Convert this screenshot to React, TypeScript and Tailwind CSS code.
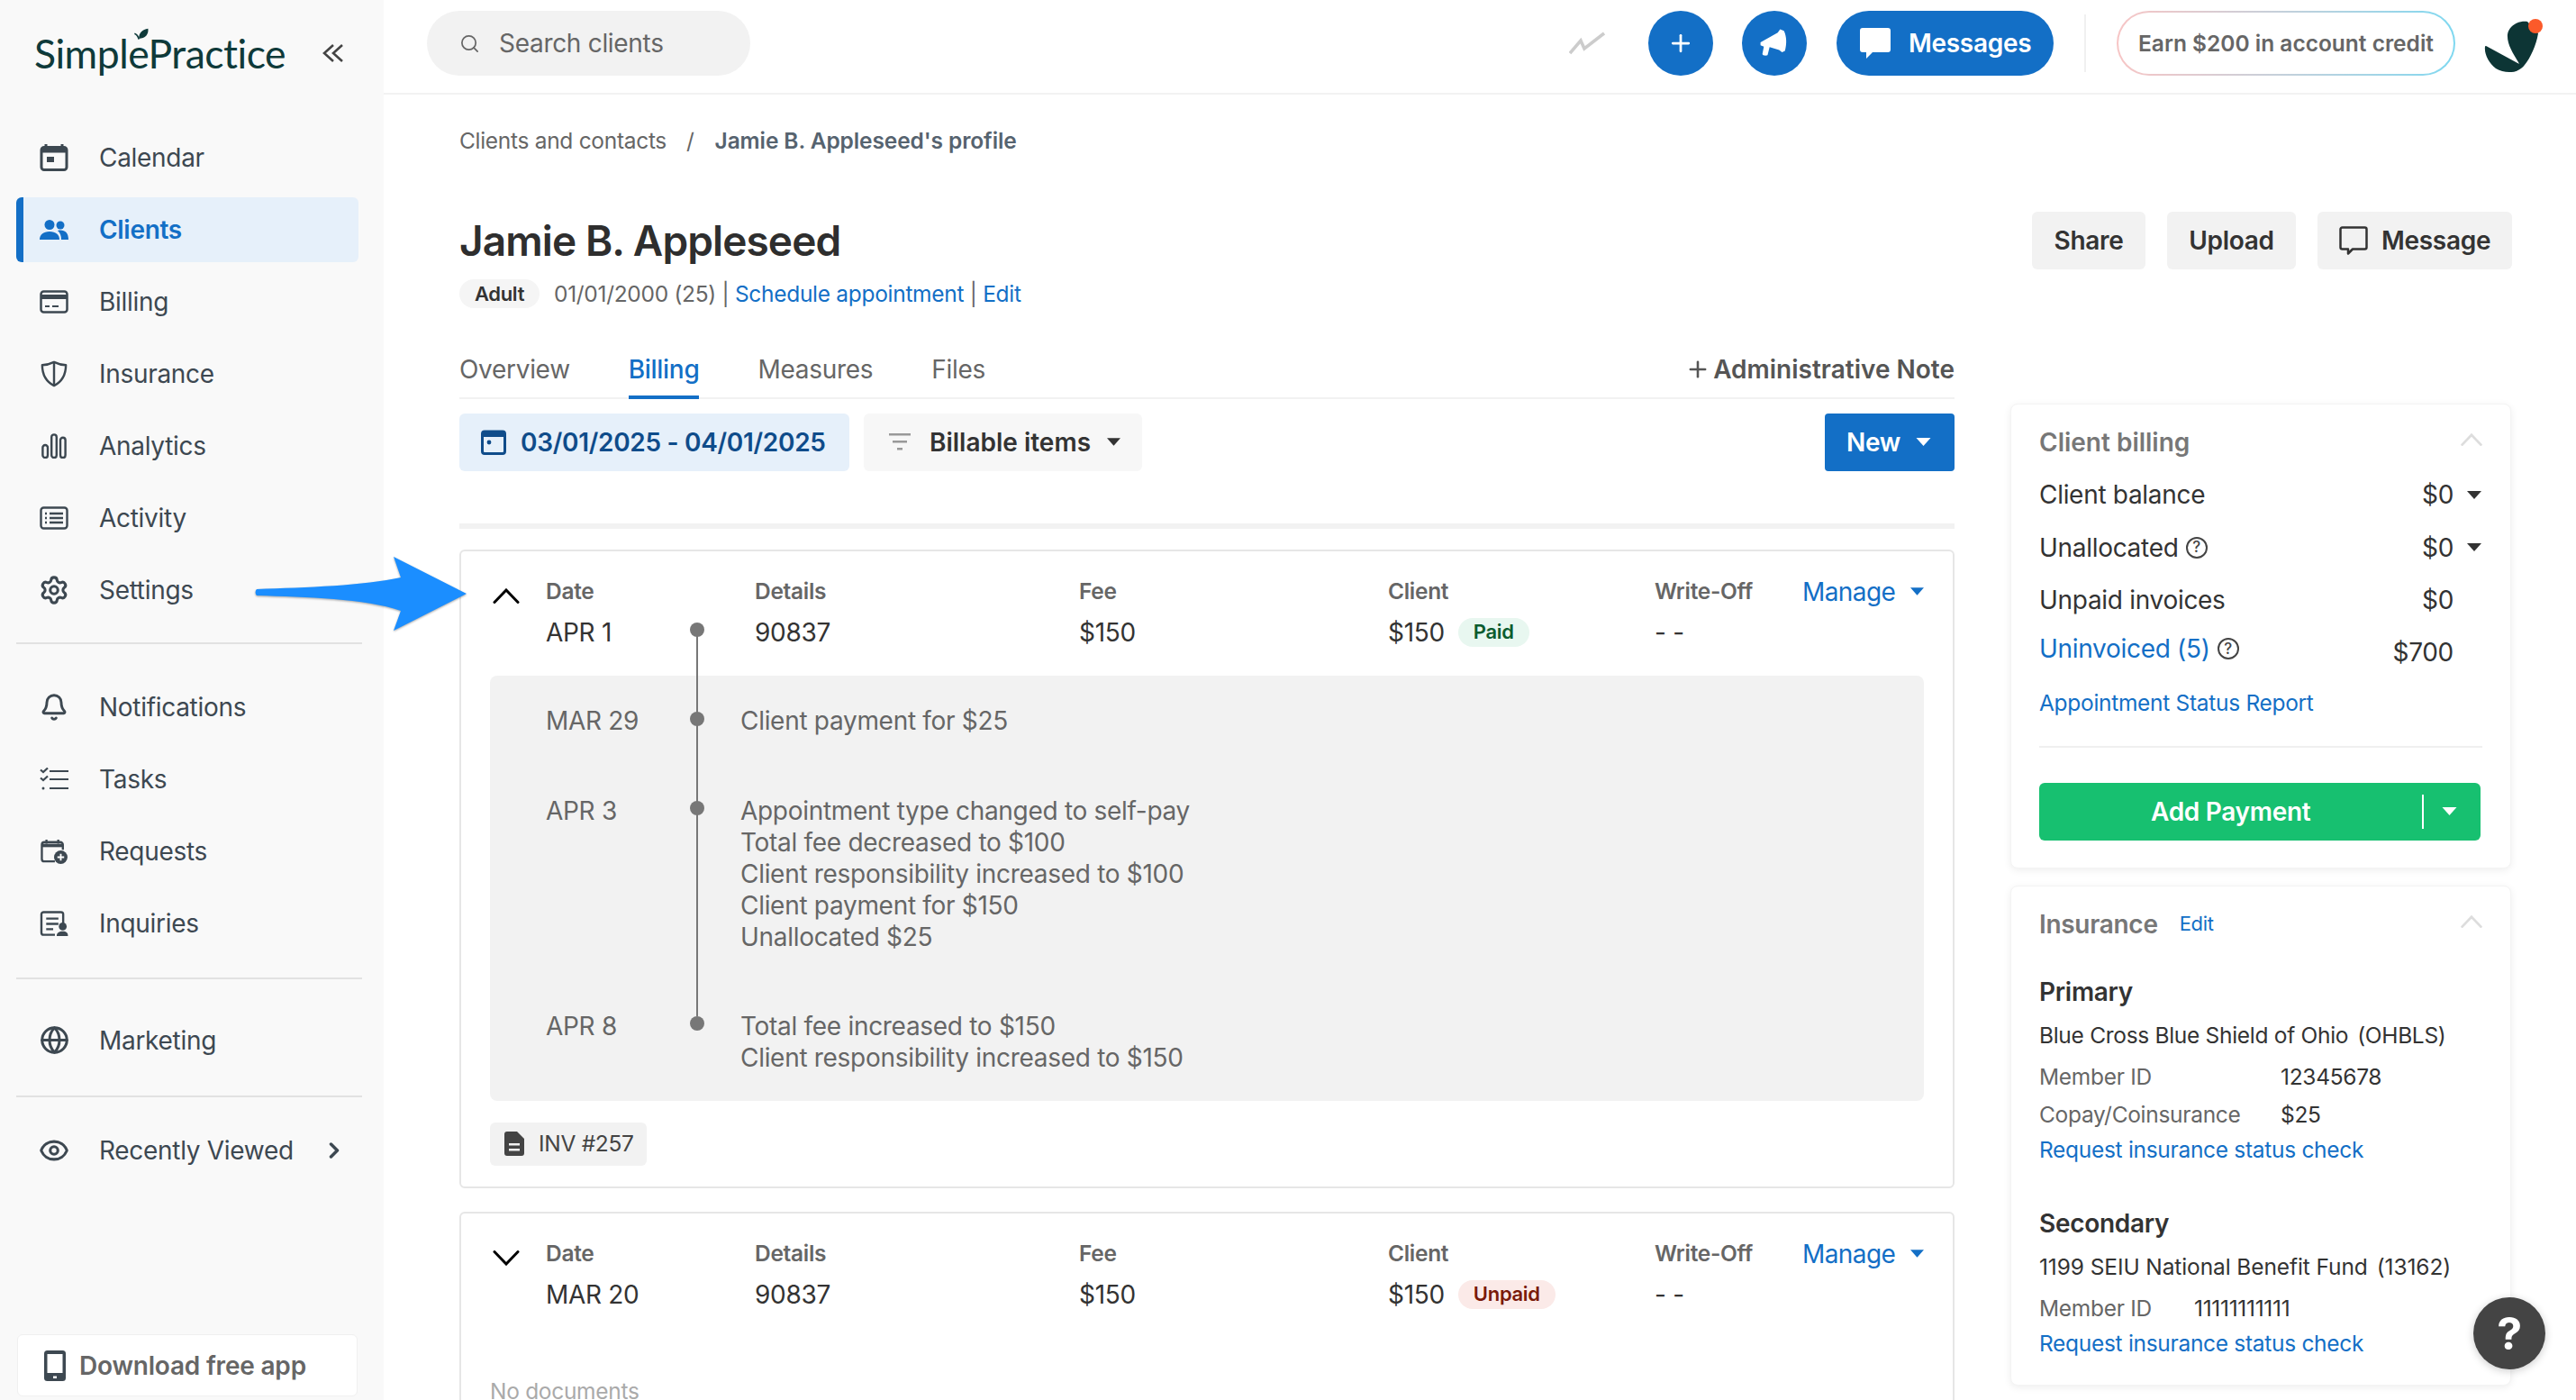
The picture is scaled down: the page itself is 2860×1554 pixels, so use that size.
import React from 'react';
import { Bell, ChevronRight, Eye, Globe, Plus, Search, Settings } from 'lucide-react';

const BLUE = 'text-[#136fc6]';

const Caret: React.FC<{ className?: string }> = ({ className }) => (
  <svg viewBox="0 0 16 9" className={className} fill="currentColor">
    <path d="M0 0h16L8 9z" />
  </svg>
);

const CalendarIcon = () => (
  <svg viewBox="0 0 32 32" className="w-[32px] h-[32px]" fill="none">
    <path d="M7 1v5M25 1v5" stroke="#3d4851" strokeWidth="3" />
    <rect x="2" y="4.500" width="28" height="25" rx="3" stroke="#3d4851" strokeWidth="3" />
    <rect x="2" y="4.500" width="28" height="6" fill="#3d4851" />
    <rect x="8" y="15" width="8" height="6" fill="#3d4851" />
  </svg>
);

const ClientsIcon = () => (
  <svg viewBox="0 0 32 24" className="w-[32px] h-[26px]" fill="#136fc6">
    <circle cx="11" cy="6.500" r="5.500" />
    <circle cx="23" cy="7" r="4.500" />
    <path d="M0 23c0-5.500 4-9 11-9s11 3.500 11 9H0z" />
    <path d="M20 13c1-.3 2-.4 3.200-.4 5.300 0 8.800 3.400 8.800 10.400h-8c0-4-1-7.500-4-10z" />
  </svg>
);

const BillingIcon = () => (
  <svg viewBox="0 0 32 26" className="w-[32px] h-[26px]" fill="none">
    <rect x="1.500" y="1.500" width="29" height="23" rx="3" stroke="#3d4851" strokeWidth="2.500" />
    <rect x="2" y="5" width="28" height="5" fill="#3d4851" />
    <path d="M6 18h5M14 18h7" stroke="#3d4851" strokeWidth="2" />
  </svg>
);

const ShieldIcon = () => (
  <svg viewBox="0 0 32 32" className="w-[30px] h-[32px]" fill="none" stroke="#3d4851" strokeWidth="2.600">
    <path d="M16 2c5 2.500 9 3.500 14 3.500 0 11-3.500 19-14 24.500C5.500 24.500 2 16.500 2 5.500 7 5.500 11 4.500 16 2z" strokeLinejoin="round" />
    <path d="M16 2v28" />
  </svg>
);

const AnalyticsIcon = () => (
  <svg viewBox="0 0 30 30" className="w-[28px] h-[28px]" fill="none" stroke="#3d4851" strokeWidth="2.600">
    <rect x="1.500" y="14" width="6" height="15" rx="3" />
    <rect x="12" y="1.500" width="6" height="27.500" rx="3" />
    <rect x="22.500" y="5" width="6" height="24" rx="3" />
  </svg>
);

const ActivityIcon = () => (
  <svg viewBox="0 0 32 26" className="w-[32px] h-[26px]" fill="none" stroke="#3d4851" strokeWidth="2.400">
    <rect x="1.500" y="1.500" width="29" height="23" rx="3" />
    <path d="M11 8h15M11 13h15M11 18h15" />
    <path d="M6 8h2M6 13h2M6 18h2" strokeWidth="2.600" />
  </svg>
);

const TasksIcon = () => (
  <svg viewBox="0 0 32 26" className="w-[32px] h-[26px]" fill="none" stroke="#3d4851" strokeWidth="2.200">
    <path d="M11 4h21M11 13h21M11 23h21" />
    <path d="M1 2.500l3 2.500 5-4.500M1 11.500l3 2.500 5-4.500" />
    <circle cx="4" cy="23" r="1.500" fill="#3d4851" stroke="none" />
  </svg>
);

const RequestsIcon = () => (
  <svg viewBox="0 0 32 30" className="w-[32px] h-[28px]" fill="none">
    <path d="M7 1v5M21 1v5" stroke="#3d4851" strokeWidth="2.500" />
    <path d="M17 27H4.500A3 3 0 0 1 1.500 24V7a3 3 0 0 1 3-3h19a3 3 0 0 1 3 3v6" stroke="#3d4851" strokeWidth="2.500" />
    <path d="M2 6h24v4H2z" fill="#3d4851" />
    <circle cx="24" cy="22" r="8" fill="#3d4851" />
    <path d="M24 18v8M20 22h8" stroke="#fff" strokeWidth="2" />
  </svg>
);

const InquiriesIcon = () => (
  <svg viewBox="0 0 32 30" className="w-[32px] h-[29px]" fill="none">
    <path d="M17 27.500H4A2.500 2.500 0 0 1 1.500 25V4A2.500 2.500 0 0 1 4 1.500h20A2.500 2.500 0 0 1 26.500 4v11" stroke="#3d4851" strokeWidth="2.500" />
    <path d="M7 9h14M7 15h14M7 21h8" stroke="#3d4851" strokeWidth="2.400" />
    <circle cx="26" cy="18" r="4.500" fill="#3d4851" />
    <path d="M19 29c0-4 3-5.500 7-5.500s6 1.500 6 5.500H19z" fill="#3d4851" />
  </svg>
);

const Chevron: React.FC<{ up?: boolean; className?: string; color: string; strokeWidth?: number }> = ({ up, className, color, strokeWidth = 3 }) => (
  <svg viewBox="0 0 30 17" className={className} fill="none" stroke={color} strokeWidth={strokeWidth} strokeLinecap="round">
    <path d={up ? 'M2 15.500L15 2l13 13.500' : 'M2 1.500L15 15 28 1.500'} />
  </svg>
);

const NavItem: React.FC<{ icon: React.ReactNode; label: string; active?: boolean; children?: React.ReactNode }> = ({ icon, label, active, children }) => (
  <div
    className={`flex items-center h-[72px] w-[380px] ml-[18px] rounded-[6px] ${
      active ? 'bg-[#e6f0fa] border-l-[8px] border-[#136fc6] text-[#136fc6] font-semibold' : 'text-[#3d4851]'
    }`}
  >
    <div className={`flex justify-center w-[36px] ${active ? 'ml-[16px]' : 'ml-[24px]'}`}>{icon}</div>
    <span className="ml-[32px] text-[28px]">{label}</span>
    {children}
  </div>
);

const Sidebar = () => (
  <aside className="w-[426px] h-full shrink-0 bg-[#f9f9f9] flex flex-col">
    <div className="h-[139px] pl-[38px] pt-[28px] flex items-start relative">
      <div className="relative font-['Lato',sans-serif] text-[44.500px] leading-[62px] tracking-[-0.5px] text-[#0f3a3a]">
        SimplePractice
        <svg viewBox="0 0 22 24" className="absolute left-[109px] top-[3px] w-[19px] h-[19px]" fill="#0f3a3a">
          <path d="M8 15C8 7 13 2 21 1c1 8-4 14-13 14z" />
          <path d="M2 8c3 1 5 4 6 8" fill="none" stroke="#0f3a3a" strokeWidth="2" />
        </svg>
      </div>
      <svg viewBox="0 0 24 22" className="absolute left-[358px] top-[48px] w-[24px] h-[22px]" fill="none" stroke="#444" strokeWidth="2.600">
        <path d="M12 2L2 11l10 9M22 2L12 11l10 9" />
      </svg>
    </div>
    <div className="flex flex-col gap-[8px]">
      <NavItem icon={<CalendarIcon />} label="Calendar" />
      <NavItem icon={<ClientsIcon />} label="Clients" active />
      <NavItem icon={<BillingIcon />} label="Billing" />
      <NavItem icon={<ShieldIcon />} label="Insurance" />
      <NavItem icon={<AnalyticsIcon />} label="Analytics" />
      <NavItem icon={<ActivityIcon />} label="Activity" />
      <NavItem icon={<Settings size={34} strokeWidth={2.2} color="#3d4851" />} label="Settings" />
    </div>
    <div className="mx-[18px] w-[384px] h-[2px] bg-[#e2e2e2] mt-[22px] mb-[34px]" />
    <div className="flex flex-col gap-[8px]">
      <NavItem icon={<Bell size={32} strokeWidth={2.2} color="#3d4851" />} label="Notifications" />
      <NavItem icon={<TasksIcon />} label="Tasks" />
      <NavItem icon={<RequestsIcon />} label="Requests" />
      <NavItem icon={<InquiriesIcon />} label="Inquiries" />
    </div>
    <div className="mx-[18px] w-[384px] h-[2px] bg-[#e2e2e2] mt-[23.500px] mb-[32px]" />
    <NavItem icon={<Globe size={33} strokeWidth={2.2} color="#3d4851" />} label="Marketing" />
    <div className="mx-[18px] w-[384px] h-[2px] bg-[#e2e2e2] mt-[25px] mb-[23px]" />
    <NavItem icon={<Eye size={34} strokeWidth={2.2} color="#3d4851" />} label="Recently Viewed">
      <ChevronRight size={28} strokeWidth={3} color="#3d4851" className="ml-auto mr-[13px]" />
    </NavItem>
    <div className="mt-auto mb-[4px] ml-[19px] w-[378px] h-[69px] bg-white rounded-[6px] border border-[#f0f0f0] flex items-center">
      <svg viewBox="0 0 24 34" className="ml-[29px] w-[24px] h-[34px]">
        <rect width="24" height="34" rx="3.500" fill="#3d4851" />
        <rect x="3.500" y="4" width="17" height="21" fill="#fff" />
        <rect x="10" y="28.500" width="4" height="2.500" fill="#fff" />
      </svg>
      <span className="ml-[15px] text-[28px] font-semibold text-[#666] tracking-[-0.2px]">Download free app</span>
    </div>
  </aside>
);

const TopBar = () => (
  <header className="h-[105px] shrink-0 border-b-2 border-[#f2f2f2] flex items-center pl-[48px] pr-[52px] pb-[7px]">
    <div className="w-[359px] h-[72px] rounded-full bg-[#f2f2f2] flex items-center pl-[36px] text-[#666]">
      <Search size={23} strokeWidth={1.8} />
      <span className="ml-[21px] text-[28px]">Search clients</span>
    </div>
    <svg viewBox="0 0 40 26" className="ml-auto w-[40px] h-[26px]" fill="none" stroke="#ccc" strokeWidth="3.600">
      <path d="M1 24L13 10l4 9L39 2" />
    </svg>
    <div className="ml-[48px] w-[72px] h-[72px] rounded-full bg-[#136fc6] flex items-center justify-center">
      <Plus size={30} strokeWidth={2.2} color="#fff" />
    </div>
    <div className="ml-[32px] w-[72px] h-[72px] rounded-full bg-[#136fc6] flex items-center justify-center">
      <svg viewBox="0 0 32 32" className="w-[34px] h-[34px]" fill="#fff">
        <path d="M1.500 15l18-10 2.500-3.500 4 1.500c3 6 3 14 1 21l-3 1.500-3-2.500-10-3-2 8c-.3 1.500-6 1-5.500-1l1.500-7.500-3.500-1.500z" />
      </svg>
    </div>
    <div className="ml-[33px] w-[241px] h-[72px] rounded-full bg-[#136fc6] flex items-center text-white">
      <svg viewBox="0 0 34 34" className="ml-[26px] w-[34px] h-[34px]" fill="#fff">
        <path d="M3 0h28a3 3 0 0 1 3 3v21a3 3 0 0 1-3 3H14l-7 7v-7H3a3 3 0 0 1-3-3V3a3 3 0 0 1 3-3z" />
      </svg>
      <span className="ml-[20px] text-[28px] font-semibold">Messages</span>
    </div>
    <div className="ml-[34px] w-[2px] h-[64px] bg-[#f0f0f0]" />
    <div className="ml-[34px] w-[376px] h-[72px] rounded-full p-[2px] bg-gradient-to-r from-[#f7c5c5] to-[#7ed8f0]">
      <div className="w-full h-full rounded-full bg-white flex items-center justify-center text-[24.500px] font-semibold tracking-normal text-[#666]">
        Earn $200 in account credit
      </div>
    </div>
    <svg viewBox="0 0 100 85" className="ml-[15px] w-[100px] h-[85px] mr-[-33px] relative top-[4px]">
      <path d="M43 28C45 18 55 13 65 14L77 27C75 40 68 55 62 62C55 72 40 72 30 66C22 60 17 50 18 42Q18 40 21 42L56 61C50 50 42 40 43 28z" fill="#0d3535" />
      <circle cx="74" cy="19" r="8" fill="#fb5a2a" />
    </svg>
  </header>
);

const Badge: React.FC<{ kind: 'paid' | 'unpaid' }> = ({ kind }) => (
  <span
    className={`ml-[15px] h-[32px] px-[17px] rounded-full flex items-center text-[22px] font-semibold ${
      kind === 'paid' ? 'bg-[#e8f7f0] text-[#0b5c2f]' : 'bg-[#fbeae8] text-[#7a1a0a]'
    }`}
  >
    {kind === 'paid' ? 'Paid' : 'Unpaid'}
  </span>
);

const ChargeColumn: React.FC<{ label: string; width: string; children: React.ReactNode }> = ({ label, width, children }) => (
  <div className={width}>
    <div className="h-[34px] flex items-center text-[24.500px] font-semibold text-[#666]">{label}</div>
    <div className="mt-[11px] h-[34px] flex items-center text-[28px] text-[#333]">{children}</div>
  </div>
);

const ChargeHeader: React.FC<{ open: boolean; date: string; kind: 'paid' | 'unpaid' }> = ({ open, date, kind }) => (
  <div className="flex pt-[28px]">
    <div className="w-[94px] pl-[35px] pt-[13px] shrink-0">
      <Chevron up={open} color="#000" className="w-[30px] h-[17px]" />
    </div>
    <ChargeColumn label="Date" width="w-[232px]">{date}</ChargeColumn>
    <ChargeColumn label="Details" width="w-[360px]">90837</ChargeColumn>
    <ChargeColumn label="Fee" width="w-[343px]">$150</ChargeColumn>
    <ChargeColumn label="Client" width="w-[296px]">
      $150
      <Badge kind={kind} />
    </ChargeColumn>
    <ChargeColumn label="Write-Off" width="w-[164px]">- -</ChargeColumn>
    <div className={`h-[34px] flex items-center text-[28px] tracking-[-0.6px] ${BLUE}`}>
      Manage
      <Caret className="ml-[17px] w-[15px] h-[9px]" />
    </div>
  </div>
);

const HistoryRow: React.FC<{ date: string; lines: string[]; className?: string }> = ({ date, lines, className }) => (
  <div className={`flex text-[28px] leading-[35px] text-[#666] ${className ?? ''}`}>
    <div className="w-[278px] pl-[62px] shrink-0">{date}</div>
    <div>
      {lines.map((l) => (
        <div key={l}>{l}</div>
      ))}
    </div>
  </div>
);

const HelpIcon = () => (
  <span className="ml-[8px] w-[24px] h-[24px] rounded-full border-2 border-[#444] flex items-center justify-center text-[17px] leading-none text-[#444] font-medium">?</span>
);

const Billing = () => (
  <div className="w-[1660px] shrink-0">
    <div className="flex items-start gap-[65px] text-[28px] text-[#666] h-[54px] border-b-[2px] border-[#f2f2f2]">
      <span className="h-[52px]">Overview</span>
      <span className={`h-[54px] font-medium ${BLUE} border-b-[4px] border-[#136fc6]`}>Billing</span>
      <span className="h-[52px]">Measures</span>
      <span className="h-[52px]">Files</span>
      <span className="ml-auto flex items-center font-semibold tracking-normal text-[#555]">
        <Plus size={28} strokeWidth={2.2} className="mr-[3px]" />
        Administrative Note
      </span>
    </div>
    <div className="flex mt-[16px] text-[28px] font-semibold">
      <div className="w-[433px] h-[64px] rounded-[6px] bg-[#e6f0fa] flex items-center pl-[24px] text-[#0f4c8a]">
        <svg viewBox="0 0 28 28" className="w-[28px] h-[28px]" fill="none">
          <rect x="1.500" y="2" width="25" height="24.500" rx="2.500" stroke="#0f4c8a" strokeWidth="3" />
          <rect x="2" y="2" width="24" height="6" fill="#0f4c8a" />
          <circle cx="9" cy="14" r="2.400" fill="#0f4c8a" />
        </svg>
        <span className="ml-[16px]">03/01/2025 - 04/01/2025</span>
      </div>
      <div className="ml-[16px] w-[309px] h-[64px] rounded-[6px] bg-[#f7f7f7] flex items-center pl-[28px] text-[#333]">
        <svg viewBox="0 0 24 20" className="w-[24px] h-[20px]" fill="#999">
          <rect width="24" height="2.500" />
          <rect x="4" y="8" width="16" height="2.500" />
          <rect x="9" y="16" width="6" height="2.500" />
        </svg>
        <span className="ml-[21px] tracking-normal">Billable items</span>
        <Caret className="ml-[18px] w-[15px] h-[9px]" />
      </div>
      <div className="ml-auto w-[144px] h-[64px] rounded-[4px] bg-[#136fc6] flex items-center pl-[24px] text-white">
        New
        <Caret className="ml-[17px] w-[17px] h-[9px]" />
      </div>
    </div>
    <div className="mt-[58px] h-[6px] bg-[#f2f2f2]" />
    <div className="mt-[23px] h-[709px] border-2 border-[#e6e6e6] rounded-[6px] relative">
      <ChargeHeader open date="APR 1" kind="paid" />
      <div className="mt-[31px] ml-[32px] mr-[32px] h-[472px] bg-[#f2f2f2] rounded-[8px] pt-[33px]">
        <HistoryRow date="MAR 29" lines={['Client payment for $25']} />
        <HistoryRow date="APR 3" lines={['Appointment type changed to self-pay', 'Total fee decreased to $100', 'Client responsibility increased to $100', 'Client payment for $150', 'Unallocated $25']} className="mt-[65px]" />
        <HistoryRow date="APR 8" lines={['Total fee increased to $150', 'Client responsibility increased to $150']} className="mt-[64px]" />
      </div>
      <div className="absolute left-[261px] top-[87px] w-[2px] h-[429px] bg-[#777]" />
      <div className="absolute left-[254px] top-[79px] w-[16px] h-[16px] rounded-full bg-[#777]" />
      <div className="absolute left-[254px] top-[178px] w-[16px] h-[16px] rounded-full bg-[#777]" />
      <div className="absolute left-[254px] top-[277px] w-[16px] h-[16px] rounded-full bg-[#777]" />
      <div className="absolute left-[254px] top-[516px] w-[16px] h-[16px] rounded-full bg-[#777]" />
      <div className="mt-[24px] ml-[32px] w-[174px] h-[48px] rounded-[6px] bg-[#f2f2f2] flex items-center pl-[16px] text-[24.500px] text-[#444]">
        <svg viewBox="0 0 22 27" className="w-[22px] h-[27px]" fill="#444">
          <path d="M3 0h11l8 8v16a3 3 0 0 1-3 3H3a3 3 0 0 1-3-3V3a3 3 0 0 1 3-3z" />
          <rect x="5" y="13" width="12" height="2.500" fill="#f2f2f2" />
          <rect x="5" y="19" width="12" height="2.500" fill="#f2f2f2" />
        </svg>
        <span className="ml-[16px]">INV #257</span>
      </div>
    </div>
    <div className="mt-[26px] h-[300px] border-2 border-[#e6e6e6] rounded-[6px]">
      <ChargeHeader open={false} date="MAR 20" kind="unpaid" />
      <div className="mt-[73px] ml-[32px] text-[24.500px] text-[#aaa] leading-[34px]">No documents</div>
    </div>
  </div>
);

const CardChevron = () => <Chevron up color="#ddd" strokeWidth={3.500} className="ml-auto mt-[-6px] w-[24px] h-[14px]" />;

const BalanceRow: React.FC<{ children: React.ReactNode; value: string; caret?: boolean }> = ({ children, value, caret }) => (
  <div className="flex items-center h-[58.500px] text-[28px] text-[#333]">
    {children}
    <span className="ml-auto">{value}</span>
    {caret ? <Caret className="ml-[14px] w-[18px] h-[9px] text-[#333]" /> : <span className="w-[32px]" />}
  </div>
);

const InsuranceRow: React.FC<{ label: string; value: string; width: string }> = ({ label, value, width }) => (
  <div className="flex items-center h-[42px] text-[24.500px]">
    <span className={`${width} text-[#666]`}>{label}</span>
    <span className="text-[#333]">{value}</span>
  </div>
);

const RightColumn = () => (
  <div className="w-[556px] ml-[62px] shrink-0">
    <div className="h-[516px] mt-[59px] rounded-[8px] bg-white border border-[#f4f4f4] shadow-[0_2px_8px_rgba(0,0,0,0.07)] px-[31px] pt-[25px]">
      <div className="flex items-center h-[34px] text-[28px] font-semibold tracking-normal text-[#777]">
        Client billing
        <CardChevron />
      </div>
      <div className="mt-[12px]">
        <BalanceRow value="$0" caret>Client balance</BalanceRow>
        <BalanceRow value="$0" caret>
          Unallocated
          <HelpIcon />
        </BalanceRow>
        <BalanceRow value="$0">Unpaid invoices</BalanceRow>
      </div>
      <div className="flex h-[58px] text-[28px] text-[#333]">
        <span className={`${BLUE} flex items-center h-[50px]`}>
          Uninvoiced (5)
          <HelpIcon />
        </span>
        <span className="ml-auto mr-[32px] flex items-center">$700</span>
      </div>
      <div className={`text-[24.500px] leading-[34px] ${BLUE} mt-[10px]`}>Appointment Status Report</div>
      <div className="mt-[31px] h-[2px] bg-[#f0f0f0]" />
      <div className="mt-[39px] w-[490px] h-[64px] rounded-[6px] bg-[#17c070] flex items-center text-white text-[28px] font-semibold relative">
        <span className="ml-[124px]">Add Payment</span>
        <span className="absolute left-[425px] top-[13px] w-[2px] h-[38px] bg-white" />
        <Caret className="absolute left-[446px] top-[27px] w-[19px] h-[9px]" />
      </div>
    </div>
    <div className="h-[555px] mt-[19px] rounded-[8px] bg-white border border-[#f4f4f4] shadow-[0_2px_8px_rgba(0,0,0,0.07)] px-[31px] pt-[25px]">
      <div className="flex items-center h-[34px]">
        <span className="text-[28px] font-semibold text-[#777]">Insurance</span>
        <span className={`ml-[24px] text-[22px] ${BLUE}`}>Edit</span>
        <CardChevron />
      </div>
      <div className="mt-[41px] h-[34px] flex items-center text-[28px] font-semibold text-[#333]">Primary</div>
      <div className="mt-[15px] h-[34px] flex items-center text-[24.500px] text-[#333]">
        Blue Cross Blue Shield of Ohio<span className="ml-[10px]">(OHBLS)</span>
      </div>
      <div className="mt-[8px]">
        <InsuranceRow label="Member ID" value="12345678" width="w-[268px]" />
        <InsuranceRow label="Copay/Coinsurance" value="$25" width="w-[268px]" />
      </div>
      <div className={`mt-[1px] h-[34px] flex items-center text-[24.500px] ${BLUE}`}>Request insurance status check</div>
      <div className="mt-[47px] h-[34px] flex items-center text-[28px] font-semibold text-[#333]">Secondary</div>
      <div className="mt-[15px] h-[34px] flex items-center text-[24.500px] tracking-[-0.1px] text-[#333]">
        1199 SEIU National Benefit Fund<span className="ml-[10px]">(13162)</span>
      </div>
      <div className="mt-[8px]">
        <InsuranceRow label="Member ID" value="11111111111" width="w-[172px]" />
      </div>
      <div className={`mt-[1px] h-[34px] flex items-center text-[24.500px] ${BLUE}`}>Request insurance status check</div>
    </div>
  </div>
);

const Main = () => (
  <main className="flex-1 flex flex-col min-w-0 bg-white">
    <TopBar />
    <div className="pl-[84px] pr-[71px]">
      <div className="mt-[33px] h-[36px] flex items-center text-[24.500px]">
        <span className="text-[#666]">Clients and contacts</span>
        <span className="ml-[22px] text-[#666]">/</span>
        <span className="ml-[23px] font-semibold tracking-[-0.1px] text-[#56636f]">Jamie B. Appleseed's profile</span>
      </div>
      <div className="flex items-start">
        <div>
          <h1 className="mt-[62px] h-[62px] flex items-center text-[46px] font-semibold text-[#2e2e2e] tracking-[-0.9px]">Jamie B. Appleseed</h1>
          <div className="flex items-center mt-[10px] text-[24.500px]">
            <span className="w-[89px] h-[32px] rounded-full bg-[#f5f5f5] flex items-center justify-center text-[22px] font-semibold text-[#333]">Adult</span>
            <span className="ml-[16px] text-[#666]">01/01/2000 (25) |&nbsp;</span>
            <span className={BLUE}>Schedule appointment</span>
            <span className="text-[#666]">&nbsp;|&nbsp;</span>
            <span className={BLUE}>Edit</span>
          </div>
        </div>
        <div className="ml-auto mt-[61px] flex gap-[24px] text-[28px] font-semibold text-[#333]">
          <div className="w-[126px] h-[64px] rounded-[6px] bg-[#f2f2f2] flex items-center justify-center">Share</div>
          <div className="w-[143px] h-[64px] rounded-[6px] bg-[#f2f2f2] flex items-center justify-center">Upload</div>
          <div className="w-[216px] h-[64px] rounded-[6px] bg-[#f2f2f2] flex items-center pl-[24px]">
            <svg viewBox="0 0 32 32" className="w-[32px] h-[32px]" fill="none" stroke="#333" strokeWidth="2.500">
              <path d="M3.500 1.500h25a2 2 0 0 1 2 2v20a2 2 0 0 1-2 2H15l-5 5v-5H3.500a2 2 0 0 1-2-2v-20a2 2 0 0 1 2-2z" strokeLinejoin="round" />
            </svg>
            <span className="ml-[15px]">Message</span>
          </div>
        </div>
      </div>
      <div className="flex mt-[44px]">
        <Billing />
        <RightColumn />
      </div>
    </div>
  </main>
);

export default function App() {
  return (
    <div className="w-[2860px] h-[1554px] overflow-hidden flex relative font-['Inter',sans-serif] tracking-[-0.3px] bg-white">
      <Sidebar />
      <Main />
      {/* callout arrow added to the screenshot */}
      <svg viewBox="0 0 240 84" className="absolute left-[281px] top-[617px] w-[240px] h-[84px] drop-shadow-[0_1px_1px_rgba(0,0,0,0.35)]" fill="#1b8eff">
        <path d="M156 1l8 23c-40 9-105 11-160 13a5 5 0 0 0 0 7c55 2 120 3 160 17l-8 22 81-41z" />
      </svg>
      <div className="absolute left-[2746px] top-[1440px] w-[80px] h-[80px] rounded-full bg-[#444] flex items-center justify-center text-white text-[50px] font-bold shadow-[0_2px_10px_rgba(0,0,0,0.2)]">
        ?
      </div>
    </div>
  );
}
